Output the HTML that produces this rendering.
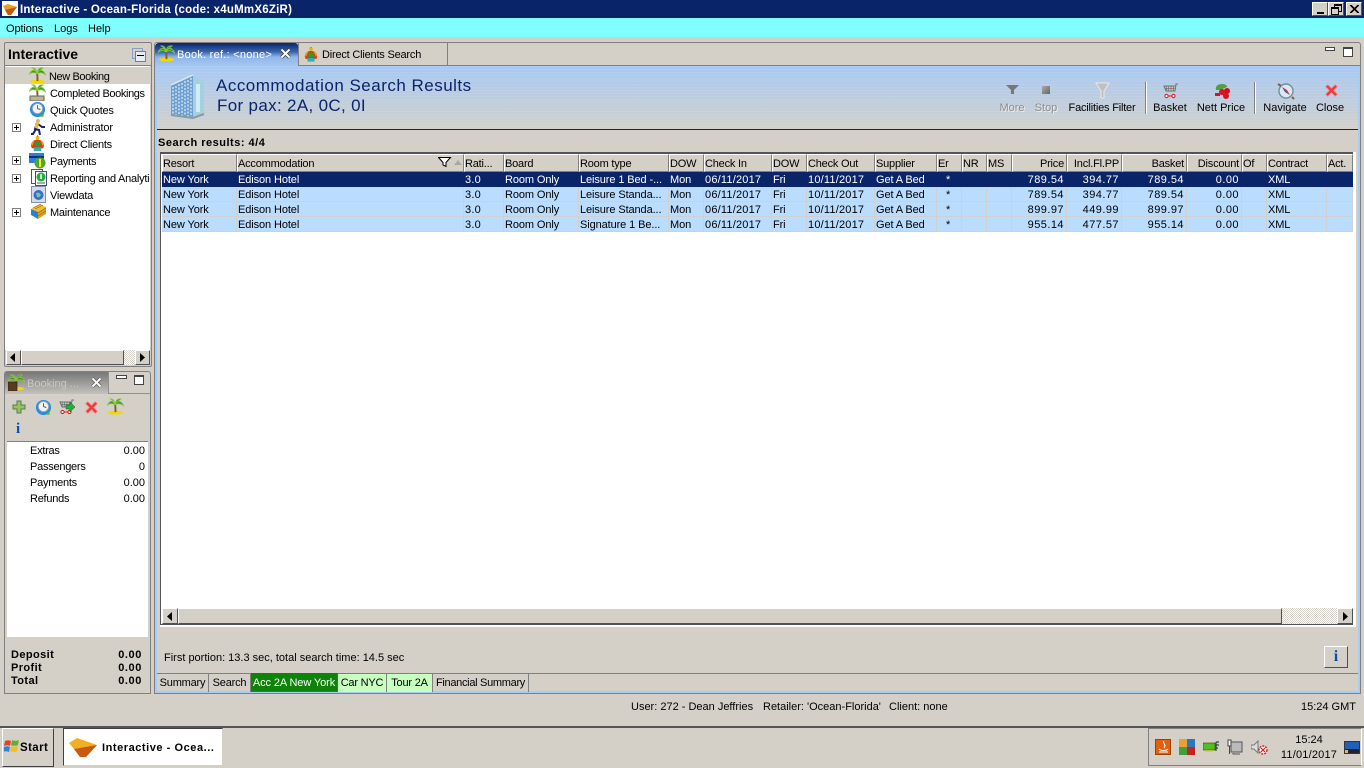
<!DOCTYPE html>
<html><head><meta charset="utf-8"><title>Interactive</title>
<style>
html,body{margin:0;padding:0;width:1364px;height:768px;overflow:hidden;background:#d4d0c8}
body{position:relative;font:11px/14px "Liberation Sans",sans-serif;color:#000}
.a,.t,svg.i{position:absolute}
.t{white-space:nowrap;height:14px;margin-top:1px}
.r{text-align:right}
.c{text-align:center}
.b{font-weight:bold}
.tr{letter-spacing:-.25px}
.bt{letter-spacing:.4px}
.btn{position:absolute;background:#d4d0c8;border:1px solid;border-color:#fff #505050 #505050 #fff;box-sizing:border-box}
table{position:absolute;left:162px;top:154px;width:1191px;border-collapse:separate;border-spacing:0;table-layout:fixed}
td,th{font:11px/14px "Liberation Sans",sans-serif;white-space:nowrap;overflow:hidden;box-sizing:border-box;text-align:left;vertical-align:top}
th{height:18px;padding:2px 0 0 0;font-weight:normal;letter-spacing:-.2px;background:#d4d0c8;border-left:1px solid #fff;border-top:1px solid #fff;border-right:1px solid #808080;border-bottom:1px solid #808080}
td{height:15px;padding:2px 0 0 1px;line-height:12px;letter-spacing:-.1px;background:#b9dcff;border-right:1px solid #d0d0d0;border-bottom:1px solid #d0d0d0}
tr.s td{background:#0a246a;color:#fff;border-color:#0a246a}
th.n{text-align:right;padding:2px 2px 0 0}
td.n{text-align:right;padding:2px 2px 0 0;letter-spacing:.45px}
td.d{letter-spacing:.2px}
td.e{padding-left:9px}
.dith{position:absolute;background:repeating-conic-gradient(#fff 0 25%,#d4d0c8 0 50%) 0 0/2px 2px}
.tab{position:absolute;top:673px;height:19px;line-height:20px;text-align:center;border-right:1px solid #808080;box-sizing:border-box;letter-spacing:-.2px}
</style></head><body>
<svg width="0" height="0" style="position:absolute"><defs>
<symbol id="palm" viewBox="0 0 18 18"><ellipse cx="9" cy="15.500" rx="8" ry="2" fill="#f4d800"/><path d="M9 15C9 11 9 9 8.500 6" stroke="#8a5a20" stroke-width="2" fill="none"/><path d="M8.500 7C6 2 3 2 0 8 3 5 6 6 8.500 7ZM8.500 7C11 2 15 2 18 9 14 5 11 6 8.500 7ZM8.500 7C8 3 6 0 3 1 6 2 7 4 8.500 7ZM8.500 7C9 3 11 0 15 1 12 3 10 4 8.500 7Z" fill="#3c9a24" stroke="#8cc83c" stroke-width=".8"/></symbol>
<symbol id="man" viewBox="0 0 18 18"><circle cx="9" cy="3" r="2" fill="#f0b000"/><path d="M9 1.500v-1" stroke="#d02000"/><path d="M2 11C3 6 6 5 9 5s6 1 7 6l-1 3H3Z" fill="#e03a10"/><rect x="6" y="7" width="6" height="5" fill="#20a040"/><rect x="5" y="13" width="8" height="4" fill="#30b0b0"/><path d="M5 6l-2 5M13 6l2 5" stroke="#f0a000" stroke-width="1.500"/></symbol>
<symbol id="clock" viewBox="0 0 18 18"><circle cx="9" cy="9" r="8" fill="#2a8ae8"/><circle cx="9" cy="8" r="5.500" fill="#f2f2ee" stroke="#90a0b0"/><path d="M9 8V4.500M9 8l3 1" stroke="#555" stroke-width="1" fill="none"/><path d="M6 16c5 1.500 9-1 11-6l-2 7Z" fill="#60c030"/></symbol>
<symbol id="x" viewBox="0 0 14 14"><path d="M1.500 3.500L3.500 1.500 7 5 10.500 1.500 12.500 3.500 9 7 12.500 10.500 10.500 12.500 7 9 3.500 12.500 1.500 10.500 5 7Z" fill="#ee3b3b" stroke="#f38b8b" stroke-width=".7"/></symbol>
<symbol id="cart" viewBox="0 0 16 16"><path d="M15 1h-2l-1 7H3L1 3h11" fill="#c8c8c8" stroke="#707070"/><path d="M3 3.500l1 4.500M5.500 3v5M8 3v5M10.500 3v5M1.500 5.500h10" stroke="#707070" stroke-width=".7"/><circle cx="3.500" cy="13" r="1.600" fill="#fff" stroke="#e01818"/><circle cx="10.500" cy="13" r="1.600" fill="#fff" stroke="#e01818"/><path d="M5 13h4" stroke="#e01818"/></symbol>
</defs></svg>

<!-- Title bar -->
<div class="a" style="left:0;top:0;width:1364px;height:18px;background:#0a246a"></div>
<div class="a" style="left:2px;top:1px;width:16px;height:15px;background:#fff"></div>
<svg class="i" style="left:2px;top:2px" width="16" height="14" viewBox="0 0 16 14"><path d="M1 4L6 2 15 5 9 13H6L3 8Z" fill="#e8a020"/><path d="M3 8L15 5 9 13H6Z" fill="#c05a10"/></svg>
<div class="t b" style="left:20px;top:2px;color:#fff;font-size:11.500px;letter-spacing:.22px">Interactive - Ocean-Florida (code: x4uMmX6ZiR)</div>
<div class="btn" style="left:1312px;top:2px;width:16px;height:14px"><div class="a" style="left:4px;top:9px;width:7px;height:2px;background:#000"></div></div>
<div class="btn" style="left:1328px;top:2px;width:16px;height:14px"><div class="a" style="left:5px;top:1px;width:6px;height:5px;border:1px solid #000;border-top-width:2px"></div><div class="a" style="left:2px;top:4px;width:6px;height:5px;border:1px solid #000;border-top-width:2px;background:#d4d0c8"></div></div>
<div class="btn" style="left:1346px;top:2px;width:16px;height:14px"><svg class="i" style="left:3px;top:2px" width="9" height="8"><path d="M0 0L8 8M1 0L9 8M8 0L0 8M9 0L1 8" stroke="#000"/></svg></div>

<!-- Menu -->
<div class="a" style="left:0;top:18px;width:1364px;height:19px;background:#80ffff"></div>
<div class="t" style="left:6px;top:21px;letter-spacing:-.1px">Options</div>
<div class="t" style="left:54px;top:21px">Logs</div>
<div class="t" style="left:88px;top:21px">Help</div>

<!-- Left navigation panel -->
<div class="a" style="left:4px;top:42px;width:148px;height:325px;border:1px solid #808080;border-radius:2px;box-sizing:border-box;background:#d4d0c8"></div>
<div class="t b" style="left:8px;top:46px;font-size:14px">Interactive</div>
<div class="a" style="left:132px;top:48px;width:9px;height:9px;border:1px solid #8aa0c0"></div>
<div class="a" style="left:135px;top:51px;width:9px;height:9px;border:1px solid #6080b0;background:#e8eef8"></div>
<div class="a" style="left:137px;top:55px;width:7px;height:1px;background:#000"></div>
<div class="a" style="left:5px;top:65px;width:146px;height:1px;background:#808080"></div>
<div class="a" style="left:5px;top:66px;width:145px;height:284px;background:#fff;overflow:hidden">
  <div class="a" style="left:0;top:1px;width:145px;height:17px;background:#d4d0c8"></div>
  <div class="t tr" style="left:44px;top:3px;letter-spacing:-.4px">New Booking</div>
  <div class="t tr" style="left:45px;top:20px;letter-spacing:-.38px">Completed Bookings</div>
  <div class="t tr" style="left:45px;top:37px">Quick Quotes</div>
  <div class="t tr" style="left:45px;top:54px;letter-spacing:-.15px">Administrator</div>
  <div class="t tr" style="left:45px;top:71px">Direct Clients</div>
  <div class="t tr" style="left:45px;top:88px;letter-spacing:-.35px">Payments</div>
  <div class="t tr" style="left:45px;top:105px">Reporting and Analytics</div>
  <div class="t tr" style="left:45px;top:122px">Viewdata</div>
  <div class="t tr" style="left:45px;top:139px">Maintenance</div>
</div>
<svg class="i" style="left:29px;top:67px" width="17" height="17"><use href="#palm"/></svg>
<svg class="i" style="left:29px;top:84px" width="17" height="17"><use href="#palm"/><rect x="1" y="12" width="14" height="5" fill="#b8b890" stroke="#666"/></svg>
<svg class="i" style="left:29px;top:101px" width="17" height="17"><use href="#clock"/></svg>
<svg class="i" style="left:30px;top:118px" width="17" height="17" viewBox="0 0 17 17"><circle cx="8" cy="3" r="2" fill="#e8b070"/><path d="M7 5l-2 6 4 1 1 5M6 11l-3 5H1M8 6l4 3h3" stroke="#202070" stroke-width="2" fill="none"/><path d="M5 5h4l-1 5H5Z" fill="#e8c020"/></svg>
<svg class="i" style="left:29px;top:135px" width="17" height="17"><use href="#man"/></svg>
<svg class="i" style="left:29px;top:152px" width="17" height="17" viewBox="0 0 17 17"><rect x="0" y="1" width="15" height="10" fill="#2a80e0"/><rect x="0" y="4" width="15" height="2" fill="#103070"/><circle cx="11" cy="11" r="5.500" fill="#50a820"/><rect x="10" y="7" width="2" height="8" fill="#ffe040"/></svg>
<svg class="i" style="left:31px;top:169px" width="16" height="17" viewBox="0 0 16 17"><rect x=".5" y=".5" width="11" height="14" fill="#fff" stroke="#405080"/><rect x="4.500" y="2.500" width="11" height="14" fill="#fff" stroke="#405080"/><circle cx="10" cy="8" r="4.500" fill="#20b040"/><rect x="9.300" y="5" width="1.500" height="5" fill="#fff"/><rect x="6" y="13.500" width="8" height="1" fill="#555"/></svg>
<svg class="i" style="left:31px;top:186px" width="15" height="17" viewBox="0 0 15 17"><rect x=".5" y=".5" width="14" height="16" fill="#d8dce8" stroke="#8090b0"/><circle cx="7.500" cy="9" r="5" fill="#3070d0"/><path d="M5 7c2-1 4 0 5 2-1 2-3 3-4 2Z" fill="#80c0a0"/></svg>
<svg class="i" style="left:30px;top:203px" width="17" height="17" viewBox="0 0 17 17"><path d="M1 6l9-5 6 3-8 5Z" fill="#f0c030"/><path d="M1 6l7 3v7l-7-4Z" fill="#2a80d0"/><path d="M8 9l8-5v7l-8 5Z" fill="#e0a020"/><path d="M3 5l8-4M5 6l8-4M8 10l8-5M8 13l8-5" stroke="#906010" stroke-width=".6"/></svg>
<div class="a" style="left:12px;top:123px;width:7px;height:7px;border:1px solid #808080;background:#fff"></div><div class="a" style="left:14px;top:127px;width:5px;height:1px;background:#000"></div><div class="a" style="left:16px;top:125px;width:1px;height:5px;background:#000"></div>
<div class="a" style="left:12px;top:156px;width:7px;height:7px;border:1px solid #808080;background:#fff"></div><div class="a" style="left:14px;top:160px;width:5px;height:1px;background:#000"></div><div class="a" style="left:16px;top:158px;width:1px;height:5px;background:#000"></div>
<div class="a" style="left:12px;top:174px;width:7px;height:7px;border:1px solid #808080;background:#fff"></div><div class="a" style="left:14px;top:178px;width:5px;height:1px;background:#000"></div><div class="a" style="left:16px;top:176px;width:1px;height:5px;background:#000"></div>
<div class="a" style="left:12px;top:208px;width:7px;height:7px;border:1px solid #808080;background:#fff"></div><div class="a" style="left:14px;top:212px;width:5px;height:1px;background:#000"></div><div class="a" style="left:16px;top:210px;width:1px;height:5px;background:#000"></div>
<!-- left scrollbar -->
<div class="dith" style="left:124px;top:350px;width:11px;height:15px"></div>
<div class="btn" style="left:6px;top:350px;width:15px;height:15px"></div>
<svg class="i" style="left:10px;top:353px" width="6" height="9"><path d="M5 0v9L0 4.500Z" fill="#000"/></svg>
<div class="btn" style="left:21px;top:350px;width:103px;height:15px"></div>
<div class="btn" style="left:135px;top:350px;width:15px;height:15px"></div>
<svg class="i" style="left:140px;top:353px" width="6" height="9"><path d="M0 0v9L5 4.500Z" fill="#000"/></svg>

<!-- Booking panel -->
<div class="a" style="left:4px;top:371px;width:147px;height:323px;border:1px solid #808080;border-radius:3px 3px 0 0;box-sizing:border-box;background:#d4d0c8"></div>
<div class="a" style="left:5px;top:372px;width:103px;height:22px;background:linear-gradient(#777,#c4c2bc);border-radius:2px 0 0 0"></div>
<div class="a" style="left:108px;top:372px;width:1px;height:22px;background:#909090"></div>
<div class="a" style="left:109px;top:393px;width:41px;height:1px;background:#909090"></div>
<svg class="i" style="left:8px;top:374px" width="17" height="17"><use href="#palm"/><rect x="0" y="8" width="9" height="9" fill="#5a3a20" stroke="#302010" stroke-width=".6"/></svg>
<div class="t" style="left:27px;top:376px;color:#c8c8c4">Booking ...</div>
<svg class="i" style="left:91px;top:377px" width="11" height="11"><path d="M1.500 1.500L9.500 9.500M9.500 1.500L1.500 9.500" stroke="#555" stroke-width="3.400"/><path d="M1.500 1.500L9.500 9.500M9.500 1.500L1.500 9.500" stroke="#fff" stroke-width="2"/></svg>
<div class="a" style="left:116px;top:375px;width:9px;height:2px;border:1px solid #444;background:#fff"></div>
<div class="a" style="left:134px;top:375px;width:8px;height:7px;border:1px solid #444;border-top-width:2px;background:#fff"></div>
<div class="a" style="left:7px;top:395px;width:141px;height:46px;background:#d4d0c8"></div>
<div class="a" style="left:7px;top:441px;width:141px;height:1px;background:#808080"></div>
<svg class="i" style="left:12px;top:400px" width="14" height="14"><path d="M5 1h4v4h4v4H9v4H5V9H1V5h4Z" fill="#9cc060" stroke="#508050"/></svg>
<svg class="i" style="left:35px;top:399px" width="17" height="17"><use href="#clock"/></svg>
<svg class="i" style="left:58px;top:399px" width="18" height="16"><use href="#cart"/><path d="M8 6h4V3l5 5-5 5v-3H8Z" fill="#20b040" stroke="#106020" stroke-width=".5"/></svg>
<svg class="i" style="left:84px;top:400px" width="15" height="15"><use href="#x"/></svg>
<svg class="i" style="left:107px;top:398px" width="17" height="17"><use href="#palm"/></svg>
<div class="t" style="left:16px;top:421px;width:8px;font:bold 15px/14px 'Liberation Serif',serif;color:#0a50a8">i</div>
<div class="a" style="left:7px;top:442px;width:141px;height:195px;background:#fff"></div>
<div class="t tr" style="left:30px;top:443px">Extras</div><div class="t r" style="left:100px;top:443px;width:45px">0.00</div>
<div class="t tr" style="left:30px;top:459px">Passengers</div><div class="t r" style="left:100px;top:459px;width:45px">0</div>
<div class="t tr" style="left:30px;top:475px">Payments</div><div class="t r" style="left:100px;top:475px;width:45px">0.00</div>
<div class="t tr" style="left:30px;top:491px">Refunds</div><div class="t r" style="left:100px;top:491px;width:45px">0.00</div>
<div class="t b bt" style="left:11px;top:647px">Deposit</div><div class="t r b" style="left:100px;top:647px;width:42px;letter-spacing:.6px">0.00</div>
<div class="t b bt" style="left:11px;top:660px">Profit</div><div class="t r b" style="left:100px;top:660px;width:42px;letter-spacing:.6px">0.00</div>
<div class="t b bt" style="left:11px;top:673px">Total</div><div class="t r b" style="left:100px;top:673px;width:42px;letter-spacing:.6px">0.00</div>

<!-- Main panel -->
<div class="a" style="left:154px;top:42px;width:1207px;height:652px;border:1px solid #808080;border-radius:3px 3px 0 0;box-sizing:border-box;background:#d4d0c8"></div>
<div class="a" style="left:155px;top:66px;width:2px;height:627px;background:#a8ccf4"></div>
<div class="a" style="left:1358px;top:66px;width:2px;height:627px;background:#a8ccf4"></div>
<div class="a" style="left:155px;top:691px;width:1205px;height:2px;background:#a8ccf4"></div>
<div class="a" style="left:155px;top:65px;width:1205px;height:1px;background:#808080"></div>
<!-- tabs -->
<div class="a" style="left:155px;top:43px;width:143px;height:24px;background:linear-gradient(#0a246a 0,#3a66b0 9px,#8fb6ea 14px,#a8c8f2 100%);border-radius:4px 3px 0 0"></div>
<svg class="i" style="left:158px;top:45px" width="17" height="17"><use href="#palm"/></svg>
<div class="t" style="left:177px;top:47px;color:#fff;letter-spacing:.25px">Book. ref.: &lt;none&gt;</div>
<svg class="i" style="left:280px;top:48px" width="11" height="11"><path d="M1.500 1.500L9.500 9.500M9.500 1.500L1.500 9.500" stroke="#333" stroke-width="3.400"/><path d="M1.500 1.500L9.500 9.500M9.500 1.500L1.500 9.500" stroke="#fff" stroke-width="2"/></svg>
<div class="a" style="left:298px;top:43px;width:1px;height:23px;background:#808080"></div>
<svg class="i" style="left:303px;top:46px" width="16" height="17"><use href="#man"/></svg>
<div class="t" style="left:322px;top:47px;letter-spacing:-.2px">Direct Clients Search</div>
<div class="a" style="left:447px;top:43px;width:1px;height:22px;background:#808080"></div>
<div class="a" style="left:1325px;top:47px;width:8px;height:2px;border:1px solid #444;background:#fff"></div>
<div class="a" style="left:1343px;top:47px;width:8px;height:7px;border:1px solid #444;border-top-width:2px;background:#fff"></div>

<!-- banner -->
<div class="a" style="left:157px;top:66px;width:1201px;height:63px;background:repeating-linear-gradient(rgba(255,255,255,.07) 0 1px,rgba(0,0,0,0) 1px 3px),linear-gradient(#a8c9f4,#d2d1cb)"></div>
<div class="a" style="left:157px;top:129px;width:1201px;height:1px;background:#0a246a"></div>
<svg class="i" style="left:168px;top:72px" width="38" height="48" viewBox="0 0 38 48"><path d="M3 13L25 3V46L3 43Z" fill="#6f9fd0"/><path d="M25 3L36 10V42L25 46Z" fill="#a4d0e0"/><path d="M30 12V40" stroke="#d0ecf6" stroke-width="4"/><path d="M5 15V42M8 14V43M11 12V43M14 11V44M17 9V44M20 8V45M23 6V45" stroke="#d8ecf8" stroke-width="1.300" stroke-dasharray="2 1.500"/><path d="M3 13L25 3" stroke="#e0e8f0" stroke-width="1.500"/><path d="M3 43L25 46 36 42" stroke="#8a9aa0" stroke-width="2" fill="none"/></svg>
<div class="t" style="left:216px;top:76px;margin:0;height:20px;font-size:17px;line-height:20px;color:#0a246a;letter-spacing:.49px">Accommodation Search Results</div>
<div class="t" style="left:217px;top:96px;margin:0;height:20px;font-size:17px;line-height:20px;color:#0a246a;letter-spacing:.33px">For pax: 2A, 0C, 0I</div>
<svg class="i" style="left:1006px;top:85px" width="13" height="11"><path d="M0 0h13L8 5v4H5V5Z" fill="#777"/></svg>
<div class="a" style="left:1042px;top:86px;width:8px;height:8px;background:linear-gradient(135deg,#aaa,#666)"></div>
<svg class="i" style="left:1095px;top:82px" width="16" height="17"><path d="M1 1h13L9 9v7H6V9Z" fill="#c0c0c0" stroke="#e8e8e8"/></svg>
<div class="t c" style="left:992px;top:100px;width:40px;color:#8e8e8e;text-shadow:1px 1px 0 #eee">More</div>
<div class="t c" style="left:1026px;top:100px;width:40px;color:#8e8e8e;text-shadow:1px 1px 0 #eee">Stop</div>
<div class="t c" style="left:1062px;top:100px;width:80px;letter-spacing:-.2px">Facilities Filter</div>
<div class="a" style="left:1145px;top:82px;width:1px;height:32px;background:#808080"></div><div class="a" style="left:1146px;top:82px;width:1px;height:32px;background:#fff"></div>
<svg class="i" style="left:1163px;top:83px" width="16" height="16"><use href="#cart"/></svg>
<div class="t c" style="left:1145px;top:100px;width:50px">Basket</div>
<svg class="i" style="left:1214px;top:83px" width="17" height="16" viewBox="0 0 17 16"><path d="M2 7C1 3 4 1 8 1c3 0 5 1 5 3L6 7Z" fill="#50a040"/><circle cx="8" cy="9" r="3" fill="#e01020"/><circle cx="13" cy="8" r="3" fill="#d01020"/><circle cx="12" cy="13" r="3" fill="#e01020"/><rect x="1" y="10" width="5" height="3" fill="#e01020"/></svg>
<div class="t c" style="left:1191px;top:100px;width:60px">Nett Price</div>
<div class="a" style="left:1254px;top:82px;width:1px;height:32px;background:#808080"></div><div class="a" style="left:1255px;top:82px;width:1px;height:32px;background:#fff"></div>
<svg class="i" style="left:1277px;top:82px" width="18" height="18" viewBox="0 0 18 18"><circle cx="9" cy="9" r="7" fill="#dce8f0" stroke="#7090a0" stroke-width="1.400"/><path d="M5 5L10 8 13 13 8 10Z" fill="#e03030"/><path d="M5 5L8 10 13 13" fill="#3060c0"/><path d="M1 2L4 4M15 15L17 17" stroke="#806040" stroke-width="2"/></svg>
<div class="t c" style="left:1255px;top:100px;width:60px">Navigate</div>
<svg class="i" style="left:1324px;top:83px" width="15" height="15"><use href="#x"/></svg>
<div class="t c" style="left:1310px;top:100px;width:40px">Close</div>

<div class="t b" style="left:158px;top:135px;letter-spacing:.5px">Search results: 4/4</div>

<!-- grid frame -->
<div class="a" style="left:160px;top:152px;width:1195px;height:474px;background:#fff;border:1px solid #555;border-width:2px 0 0 1px;box-sizing:border-box"></div>
<div class="a" style="left:160px;top:624px;width:1195px;height:1px;background:#555"></div>
<div class="a" style="left:160px;top:625px;width:1196px;height:2px;background:#fff"></div>
<div class="a" style="left:1353px;top:152px;width:3px;height:475px;background:#fff"></div>

<table>
<colgroup><col style="width:75px"><col style="width:227px"><col style="width:40px"><col style="width:75px"><col style="width:90px"><col style="width:35px"><col style="width:68px"><col style="width:35px"><col style="width:68px"><col style="width:62px"><col style="width:25px"><col style="width:25px"><col style="width:25px"><col style="width:55px"><col style="width:55px"><col style="width:65px"><col style="width:55px"><col style="width:25px"><col style="width:60px"><col style="width:26px"></colgroup>
<tr><th>Resort</th><th>Accommodation</th><th>Rati...</th><th>Board</th><th>Room type</th><th>DOW</th><th>Check In</th><th>DOW</th><th>Check Out</th><th>Supplier</th><th>Er</th><th>NR</th><th>MS</th><th class="n">Price</th><th class="n">Incl.Fl.PP</th><th class="n">Basket</th><th class="n">Discount</th><th>Of</th><th>Contract</th><th>Act.</th></tr>
<tr class="s"><td>New York</td><td>Edison Hotel</td><td class="d">3.0</td><td>Room Only</td><td>Leisure 1 Bed -...</td><td>Mon</td><td class="d">06/11/2017</td><td>Fri</td><td class="d">10/11/2017</td><td>Get A Bed</td><td class="e">*</td><td></td><td></td><td class="n">789.54</td><td class="n">394.77</td><td class="n">789.54</td><td class="n">0.00</td><td></td><td>XML</td><td></td></tr>
<tr><td>New York</td><td>Edison Hotel</td><td class="d">3.0</td><td>Room Only</td><td>Leisure Standa...</td><td>Mon</td><td class="d">06/11/2017</td><td>Fri</td><td class="d">10/11/2017</td><td>Get A Bed</td><td class="e">*</td><td></td><td></td><td class="n">789.54</td><td class="n">394.77</td><td class="n">789.54</td><td class="n">0.00</td><td></td><td>XML</td><td></td></tr>
<tr><td>New York</td><td>Edison Hotel</td><td class="d">3.0</td><td>Room Only</td><td>Leisure Standa...</td><td>Mon</td><td class="d">06/11/2017</td><td>Fri</td><td class="d">10/11/2017</td><td>Get A Bed</td><td class="e">*</td><td></td><td></td><td class="n">899.97</td><td class="n">449.99</td><td class="n">899.97</td><td class="n">0.00</td><td></td><td>XML</td><td></td></tr>
<tr><td>New York</td><td>Edison Hotel</td><td class="d">3.0</td><td>Room Only</td><td>Signature 1 Be...</td><td>Mon</td><td class="d">06/11/2017</td><td>Fri</td><td class="d">10/11/2017</td><td>Get A Bed</td><td class="e">*</td><td></td><td></td><td class="n">955.14</td><td class="n">477.57</td><td class="n">955.14</td><td class="n">0.00</td><td></td><td>XML</td><td></td></tr>
</table>
<svg class="i" style="left:438px;top:157px" width="14" height="11"><path d="M.5 .5h12L8 5.500v4L5 8V5.500Z" fill="#fff" stroke="#000"/></svg>
<svg class="i" style="left:454px;top:160px" width="8" height="5"><path d="M4 0l4 5H0Z" fill="#a8a8a8"/></svg>

<!-- grid scrollbar -->
<div class="dith" style="left:1282px;top:608px;width:56px;height:16px"></div>
<div class="btn" style="left:162px;top:608px;width:16px;height:16px"></div>
<svg class="i" style="left:167px;top:612px" width="6" height="9"><path d="M5 0v9L0 4.500Z" fill="#000"/></svg>
<div class="btn" style="left:178px;top:608px;width:1104px;height:16px"></div>
<div class="btn" style="left:1337px;top:608px;width:16px;height:16px"></div>
<svg class="i" style="left:1343px;top:612px" width="6" height="9"><path d="M0 0v9L5 4.500Z" fill="#000"/></svg>

<div class="t" style="left:164px;top:650px">First portion: 13.3 sec, total search time: 14.5 sec</div>
<div class="btn" style="left:1324px;top:646px;width:24px;height:22px"><div class="t c" style="left:0;top:2px;width:22px;font:bold 16px/14px 'Liberation Serif',serif;color:#0a50a8">i</div></div>

<!-- bottom tabs -->
<div class="a" style="left:157px;top:673px;width:1201px;height:1px;background:#808080"></div>
<div class="tab" style="left:157px;width:52px">Summary</div>
<div class="tab" style="left:209px;width:42px">Search</div>
<div class="tab" style="left:251px;width:87px;background:#0c8408;color:#fff;border-right:1px solid #606060;border-bottom:1px solid #606060;letter-spacing:-.1px">Acc 2A New York</div>
<div class="tab" style="left:338px;width:49px;background:#c8ffc0;top:674px;height:18px;line-height:18px">Car NYC</div>
<div class="tab" style="left:387px;width:46px;background:#c8ffc0;top:674px;height:18px;line-height:18px">Tour 2A</div>
<div class="tab" style="left:433px;width:96px;letter-spacing:-.3px">Financial Summary</div>

<!-- status -->
<div class="t" style="left:631px;top:699px">User: 272 - Dean Jeffries</div>
<div class="t" style="left:763px;top:699px">Retailer: 'Ocean-Florida'</div>
<div class="t" style="left:889px;top:699px">Client: none</div>
<div class="t r" style="left:1280px;top:699px;width:76px">15:24 GMT</div>

<!-- Taskbar -->
<div class="a" style="left:0;top:726px;width:1364px;height:2px;background:#555"></div>
<div class="a" style="left:0;top:728px;width:1364px;height:40px;background:#d4d0c8"></div>
<div class="a" style="left:2px;top:728px;width:52px;height:39px;border:1px solid;border-color:#fff #404040 #404040 #fff;box-sizing:border-box"></div>
<svg class="i" style="left:4px;top:739px" width="16" height="15" viewBox="0 0 16 15"><path d="M1 2c2-1 4-1 6 0L6 7C4 6 2 6 0 7Z" fill="#e84020"/><path d="M8 1c2 1 5 1 7 0l-1 5c-2 1-5 1-7 0Z" fill="#60b030"/><path d="M0 8c2-1 4-1 6 0l-1 5c-2-1-4-1-6 0Z" fill="#3080e0"/><path d="M7 7c2 1 5 1 7 0l-1 5c-2 1-5 1-7 0Z" fill="#f0c020"/></svg>
<div class="t b" style="left:20px;top:740px;font-size:11.500px;letter-spacing:.4px">Start</div>
<div class="a" style="left:63px;top:728px;width:160px;height:38px;background:#fff;border:1px solid;border-color:#404040 #d4d0c8 #d4d0c8 #404040;box-sizing:border-box"></div>
<svg class="i" style="left:68px;top:737px" width="30" height="21" viewBox="0 0 30 21"><path d="M1 6L9 1 29 8 18 20H12L6 12Z" fill="#f0b020"/><path d="M6 12L29 8 18 20H12Z" fill="#c85a10"/></svg>
<div class="t b" style="left:102px;top:740px;letter-spacing:.55px">Interactive - Ocea...</div>
<div class="a" style="left:1148px;top:728px;width:214px;height:38px;border:1px solid;border-color:#808080 #fff #808080 #808080;box-sizing:border-box"></div>
<div class="a" style="left:1155px;top:739px;width:16px;height:16px;background:#e06010;border:1px solid #a04000;box-sizing:border-box"><svg class="i" style="left:2px;top:1px" width="11" height="12"><path d="M6 0c-2 3 3 3 0 7M1 8c2 2 7 2 9 0M1 11h9" stroke="#fff" fill="none" stroke-width="1.100"/></svg></div>
<svg class="i" style="left:1179px;top:739px" width="16" height="16"><rect x="0" y="0" width="8" height="8" fill="#e8a030"/><rect x="8" y="0" width="8" height="8" fill="#2878c0"/><rect x="0" y="8" width="8" height="8" fill="#40a040"/><rect x="8" y="8" width="8" height="8" fill="#c82020"/></svg>
<svg class="i" style="left:1203px;top:741px" width="16" height="12"><rect x="0" y="2" width="12" height="7" fill="#50c020" stroke="#205010" stroke-width=".6"/><path d="M3 9v2M5 9v2M7 9v2M9 9v2" stroke="#e0c000"/><path d="M13 1v9M13 1h3M13 4h3M13 7h2" stroke="#222"/></svg>
<svg class="i" style="left:1227px;top:739px" width="16" height="16"><rect x="4" y="3" width="11" height="10" fill="#bbb" stroke="#555"/><path d="M6 14v1h7" stroke="#555" fill="none"/><path d="M1 1h3v6H1Z" fill="#fff" stroke="#444"/><path d="M2.500 7v8" stroke="#444"/></svg>
<svg class="i" style="left:1251px;top:740px" width="17" height="15"><path d="M0 5h3l4-4v12L3 9H0Z" fill="#ddd" stroke="#777"/><circle cx="12" cy="10" r="4" fill="#fff" stroke="#e01818" stroke-width="1.400" stroke-dasharray="2 1"/><path d="M10 8l4 4M14 8l-4 4" stroke="#e01818" stroke-width="1.200"/></svg>
<div class="t c" style="left:1279px;top:732px;width:60px">15:24</div>
<div class="t c" style="left:1279px;top:748px;margin:0;width:60px;letter-spacing:.2px">11/01/2017</div>
<svg class="i" style="left:1344px;top:741px" width="16" height="13"><rect x=".5" y=".5" width="15" height="12" fill="#2060b8" stroke="#334"/><rect x="1" y="8" width="14" height="4" fill="#223"/><rect x="1" y="9" width="3" height="3" fill="#e0c040"/></svg>
</body></html>
